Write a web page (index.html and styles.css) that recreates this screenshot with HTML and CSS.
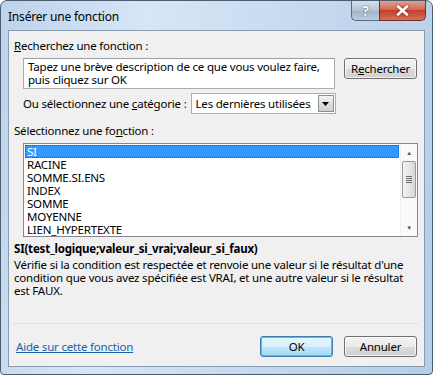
FILE: index.html
```html
<!DOCTYPE html>
<html>
<head>
  <title>Insérer une fonction</title>
  <link rel="stylesheet" href="styles.css">
</head>
<body>
  <div class="window">
    <div class="titlebar">
      <span class="title">Insérer une fonction</span>
      <div class="caption-btns">
        <span class="cap help">?</span>
        <span class="cap close">
          <svg width="13" height="11" viewBox="0 0 13 11"><path d="M2 1.5 L11 9.5 M11 1.5 L2 9.5" stroke="#fff" stroke-width="2.6" stroke-linecap="round"/></svg>
        </span>
      </div>
    </div>

    <div class="client">
      <div class="label"><u>R</u>echerchez une fonction :</div>
      <div class="search-row">
        <div class="textbox">Tapez une brève description de ce que vous voulez faire, puis cliquez sur OK</div>
        <button class="btn">R<u>e</u>chercher</button>
      </div>
      <div class="cat-row">
        <span>Ou sélectionnez une <u>c</u>atégorie :</span>
        <div class="combo">
          <span class="combo-text">Les dernières utilisées</span>
          <span class="combo-arrow"><svg width="7" height="4" viewBox="0 0 7 4"><path d="M0 0 H7 L3.5 4 Z" fill="#000"/></svg></span>
        </div>
      </div>

      <div class="label">Sélectionnez une fo<u>n</u>ction :</div>
      <div class="listbox">
        <ul class="items">
          <li class="sel">SI</li>
          <li>RACINE</li>
          <li>SOMME.SI.ENS</li>
          <li>INDEX</li>
          <li>SOMME</li>
          <li>MOYENNE</li>
          <li>LIEN_HYPERTEXTE</li>
        </ul>
        <div class="scrollbar">
          <span class="arrow">▲</span>
          <div class="track">
            <div class="thumb"><span class="grip"></span></div>
          </div>
          <span class="arrow">▼</span>
        </div>
      </div>

      <div class="signature">SI(test_logique;valeur_si_vrai;valeur_si_faux)</div>
      <p class="desc">Vérifie si la condition est respectée et renvoie une valeur si le résultat d'une condition que vous avez spécifiée est VRAI, et une autre valeur si le résultat est FAUX.</p>

      <div class="footer">
        <a class="help-link" href="#">Aide sur cette fonction</a>
        <div class="actions">
          <button class="btn default">OK</button>
          <button class="btn">Annuler</button>
        </div>
      </div>
    </div>
  </div>
</body>
</html>
```

FILE: styles.css
```css
* { box-sizing: border-box; }
html, body { margin: 0; padding: 0; }
body {
  font-family: 'Noto Sans', 'Open Sans', sans-serif;
  font-size: 11.5px;
  letter-spacing: -0.2px;
  color: #000;
  background: #fff;
}
u { text-decoration: underline; text-underline-offset: 1px; }

.window {
  width: 433px; height: 375px;
  border: 1px solid #4d5d70;
  border-radius: 7px 7px 4px 4px;
  background: linear-gradient(100deg, #bcd3ec 0%, #d6e6f6 30%, #c9dcf0 55%, #b4cde8 100%);
  display: flex; flex-direction: column;
  overflow: hidden;
}

.titlebar {
  height: 29px;
  display: flex; justify-content: space-between; align-items: flex-start;
  padding-left: 7px;
}
.title { margin-top: 7px; font-size: 12px; color: #000; }
.caption-btns { display: flex; margin-right: 6px; }
.cap {
  height: 20px;
  display: flex; align-items: center; justify-content: center;
  border: 1px solid #5c6b7e; border-top: none;
}
.help {
  width: 28px;
  border-radius: 0 0 0 5px;
  border-right: none;
  background: linear-gradient(#d3dfec, #b3c4d8 50%, #9fb3cb 51%, #bccde0);
  color: #fff; font-weight: bold; font-size: 14px;
  text-shadow: 0 0 1px #3b4a5c, 0 0 1px #3b4a5c;
}
.close {
  width: 47px;
  border-radius: 0 0 5px 0;
  border-color: #7b2b20;
  background: linear-gradient(#e3a093, #cf6a57 45%, #c2402b 50%, #d2725c);
}
.close svg { filter: drop-shadow(0 0 1px #6a1a10); }

.client {
  flex: 1;
  margin: 0 7px 7px 7px;
  background: #f0f0f0;
  border: 1px solid #8a9bb0;
  padding: 7px 6px 0 5px;
  display: flex; flex-direction: column;
}

.label { line-height: 15px; }

.search-row {
  display: flex; align-items: flex-start;
  margin: 5px 0 0 9px;
}
.textbox {
  width: 312px; height: 31px;
  background: #fff;
  border: 1px solid #abadb3;
  border-top-color: #9a9ea6;
  padding: 1px 4px;
  line-height: 13px;
}
.btn {
  font-family: inherit; font-size: 11.5px; letter-spacing: -0.2px; color: #000;
  width: 73px; height: 21px;
  padding: 0;
  border: 1px solid #707070;
  border-radius: 3px;
  background: linear-gradient(#f2f2f2, #ebebeb 50%, #dddddd 51%, #cfcfcf);
  box-shadow: inset 0 0 0 1px rgba(255,255,255,0.7);
}
.search-row .btn { margin-left: 9px; }

.cat-row {
  display: flex; align-items: center;
  margin: 4px 0 0 9px;
}
.combo {
  margin-left: 4px;
  width: 145px; height: 21px;
  display: flex; align-items: center;
  background: #fff;
  border: 1px solid #abadb3;
  white-space: nowrap;
}
.combo-text { flex: 1; padding-left: 4px; }
.combo-arrow {
  width: 16px; height: 17px;
  margin-right: 1px;
  display: flex; align-items: center; justify-content: center;
  border: 1px solid #8f8f8f;
  background: linear-gradient(#f2f2f2, #e0e0e0 50%, #d0d0d0);
}

.cat-row + .label { margin-top: 9px; }

.listbox {
  margin: 5px 0 0 9px;
  width: 395px; height: 94px;
  background: #fff;
  border: 1px solid #828790;
  display: flex;
}
.items {
  list-style: none; margin: 0; padding: 1px;
  flex: 1;
}
.items li { height: 13px; line-height: 13px; padding-left: 2px; }
.items li.sel {
  background: #3399ff; color: #fff;
  outline: 1px dotted #1a5a9a; outline-offset: -1px;
}
.scrollbar {
  width: 17px;
  display: flex; flex-direction: column;
  background: #fafafa;
  border-left: 1px solid #f0f0f0;
}
.arrow {
  height: 17px;
  display: flex; align-items: center; justify-content: center;
  font-size: 6px; color: #555;
}
.track { flex: 1; padding-top: 0; }
.thumb {
  height: 37px;
  margin: 0 1px;
  border: 1px solid #9b9b9b;
  border-radius: 2px;
  background: linear-gradient(90deg, #f3f3f3, #e6e6e6 50%, #d6d6d6);
  display: flex; align-items: center; justify-content: center;
}
.grip {
  width: 6px; height: 7px;
  background: repeating-linear-gradient(#6b6b6b 0 1px, transparent 1px 2px);
}

.signature {
  margin-top: 4px;
  font-weight: bold;
  line-height: 15px;
}
.desc {
  margin: 2px 0 0 0;
  line-height: 13px;
}

.footer {
  margin-top: auto;
  margin-left: -1px;
  border-top: 1px solid #dfdfdf;
  height: 43px;
  display: flex; justify-content: space-between; align-items: center;
  padding: 3px 0 0 3px;
}
.help-link {
  color: #1a61a8;
  text-decoration: underline;
}
.actions { display: flex; gap: 11px; margin-right: 1px; }
.btn.default {
  border-color: #3c7fb1;
  background: linear-gradient(#eaf6fd, #d9f0fc 50%, #bee6fd 51%, #a7d9f5);
  box-shadow: inset 0 0 0 1px #48c0f0;
}
```
